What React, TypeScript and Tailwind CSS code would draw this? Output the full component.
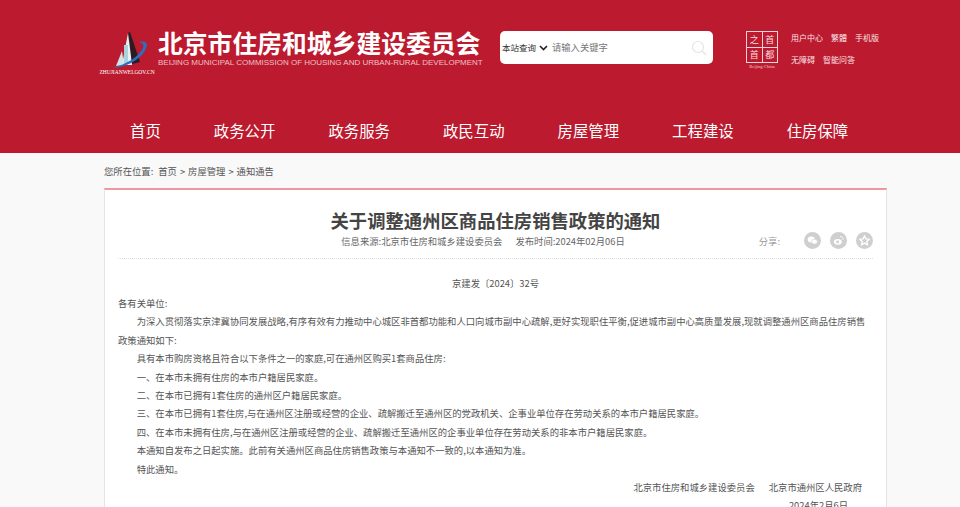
const cjk = "font-['Microsoft_YaHei','Noto_Sans_CJK_SC',sans-serif]";

function Logo() {
  return (
    <div className="flex w-[46px] flex-col items-center shrink-0">
      <svg width="46" height="38" viewBox="0 0 46 38">
        <path d="M18 34 L24 2 L26 2 L28 34 Z" fill="#e8f2f4" />
        <path d="M24 2 L26 1 L36 31 L28 33 Z" fill="#2a1c22" />
        <path d="M12 35 L18 20 L20 34 Z" fill="#cfe3ea" />
        <path d="M20 14 L24 14 L24 34 L20 34 Z" fill="#a9d3dd" />
        <path d="M9 37 C24 36 42 26 43 13 C42 11 39 10 35 11 C39 12 40 14 39 17 C35 26 22 33 9 37 Z" fill="#2b6fc0" />
      </svg>
      <span className="font-['Liberation_Serif',serif] text-[5.5px] leading-[7px] whitespace-nowrap text-white">ZHUJIANWEI.GOV.CN</span>
    </div>
  );
}

function Seal() {
  return (
    <div className="flex w-[36px] flex-col items-center shrink-0">
      <div className={`grid h-[32px] w-[32px] grid-cols-2 grid-rows-2 gap-px border border-[#f3d3d7] bg-[#f3d3d7] text-[9px] leading-none text-[#f7dfe2] ${cjk}`}>
        <span className="flex items-center justify-center bg-[#bc1a2e]">之</span>
        <span className="flex items-center justify-center bg-[#bc1a2e]">首</span>
        <span className="flex items-center justify-center bg-[#bc1a2e]">首</span>
        <span className="flex items-center justify-center bg-[#bc1a2e]">都</span>
      </div>
      <span className="mt-[1px] font-['Liberation_Serif',serif] text-[4.5px] leading-[5px] whitespace-nowrap text-[#f3d3d7]">Beijing·China</span>
    </div>
  );
}

const nav = ["首页", "政务公开", "政务服务", "政民互动", "房屋管理", "工程建设", "住房保障"];

const body = [
  { t: "各有关单位:", i: false },
  { t: "为深入贯彻落实京津冀协同发展战略,有序有效有力推动中心城区非首都功能和人口向城市副中心疏解,更好实现职住平衡,促进城市副中心高质量发展,现就调整通州区商品住房销售政策通知如下:", i: true },
  { t: "具有本市购房资格且符合以下条件之一的家庭,可在通州区购买1套商品住房:", i: true },
  { t: "一、在本市未拥有住房的本市户籍居民家庭。", i: true },
  { t: "二、在本市已拥有1套住房的通州区户籍居民家庭。", i: true },
  { t: "三、在本市已拥有1套住房,与在通州区注册或经营的企业、疏解搬迁至通州区的党政机关、企事业单位存在劳动关系的本市户籍居民家庭。", i: true },
  { t: "四、在本市未拥有住房,与在通州区注册或经营的企业、疏解搬迁至通州区的企事业单位存在劳动关系的非本市户籍居民家庭。", i: true },
  { t: "本通知自发布之日起实施。此前有关通州区商品住房销售政策与本通知不一致的,以本通知为准。", i: true },
  { t: "特此通知。", i: true },
];

export default function App() {
  return (
    <div className={`h-[507px] w-[960px] overflow-hidden bg-[#f9f9f9] ${cjk}`}>
      <header className="h-[153px] bg-[#bc1a2e] text-white">
        <div className="flex h-[108px] items-start pl-[104px] pt-[31px]">
          <Logo />
          <div className="ml-[8px] w-[322px] shrink-0">
            <div className="-mt-[4px] text-[24.8px] font-bold leading-[30px] whitespace-nowrap">北京市住房和城乡建设委员会</div>
            <div className="mt-[1px] font-['Liberation_Sans',sans-serif] text-[8px] leading-[10px] whitespace-nowrap text-[#f0c0c6]">BEIJING MUNICIPAL COMMISSION OF HOUSING AND URBAN-RURAL DEVELOPMENT</div>
          </div>
          <div className="ml-[20px] flex h-[33px] w-[213px] items-center rounded-[5px] bg-white pl-[2px] pr-[6px] text-[8.5px] shrink-0">
            <span className="text-[#333]">本站查询</span>
            <svg className="ml-[3px]" width="9" height="6" viewBox="0 0 9 6"><path d="M1 1 L4.5 4.5 L8 1" fill="none" stroke="#222" strokeWidth="1.6" /></svg>
            <span className="ml-[4px] flex-1 text-[9.3px] text-[#777]">请输入关键字</span>
            <svg width="16" height="16" viewBox="0 0 16 16"><circle cx="7" cy="7" r="5.5" fill="none" stroke="#e4e4e4" strokeWidth="1.2" /><path d="M11 11 L15 15" stroke="#e4e4e4" strokeWidth="1.2" /></svg>
          </div>
          <div className="ml-[31px]"><Seal /></div>
          <div className="ml-[11px] flex flex-col gap-[10px] pt-[1px] text-[8px] leading-[12px] text-[#fbe3e6] whitespace-nowrap">
            <div className="flex gap-[8px]"><span>用户中心</span><span>繁體</span><span>手机版</span></div>
            <div className="flex gap-[8px]"><span>无障碍</span><span>智能问答</span></div>
          </div>
        </div>
        <nav className="flex h-[45px] items-center gap-[53px] pl-[130px] text-[15.4px] whitespace-nowrap">
          {nav.map((n) => <span key={n}>{n}</span>)}
        </nav>
      </header>
      <main className="pl-[104px]">
        <div className="flex h-[35px] items-center gap-[3px] text-[9.33px] text-[#555]">
          <span>您所在位置:</span><span className="ml-[2px]">首页</span><span>&gt;</span><span>房屋管理</span><span>&gt;</span><span>通知通告</span>
        </div>
        <article className="h-[400px] w-[783px] border-x border-[#e4e4e4] border-t-2 border-t-[#ea98a1] bg-white px-[13px]">
          <h1 className="mt-[18px] text-center text-[18.33px] font-bold leading-[24px] text-[#444]">关于调整通州区商品住房销售政策的通知</h1>
          <div className="relative flex h-[27px] items-start justify-center border-b border-dotted border-[#ddd] pr-[25px] pt-[2px] text-[9.33px] leading-[14px] text-[#666]">
            <span>信息来源:北京市住房和城乡建设委员会</span>
            <span className="ml-[13px]">发布时间:2024年02月06日</span>
            <div className="absolute right-0 top-0 flex items-center gap-[9px] text-[#999]">
              <span className="mr-[15px]">分享:</span>
              {[0, 1, 2].map((i) => (
                <span key={i} className="flex h-[17px] w-[17px] items-center justify-center rounded-full bg-[#cfcfcf]">
                  <svg width="11" height="11" viewBox="0 0 11 11" fill="white">
                    {i === 0 && <><ellipse cx="4.3" cy="4.5" rx="3.6" ry="3" /><ellipse cx="7.4" cy="6.7" rx="3" ry="2.4" stroke="#cfcfcf" strokeWidth="0.6" /></>}
                    {i === 1 && <><ellipse cx="4.8" cy="6.8" rx="4" ry="2.9" /><circle cx="4.6" cy="6.9" r="1.4" fill="#cfcfcf" /><path d="M7 1.5 C9.2 1.3 10.4 3 9.9 4.8" fill="none" stroke="white" strokeWidth="1" /></>}
                    {i === 2 && <path d="M5.5 0.8 L6.9 3.9 L10.2 4.3 L7.7 6.5 L8.4 9.8 L5.5 8.1 L2.6 9.8 L3.3 6.5 L0.8 4.3 L4.1 3.9 Z" fill="none" stroke="white" strokeWidth="1.3" />}
                  </svg>
                </span>
              ))}
            </div>
          </div>
          <div className="text-[9.33px] leading-[18.4px] text-[#555]">
            <p className="mt-[15px] text-center">京建发〔2024〕32号</p>
            <div className="mt-[1.5px]">
              {body.map((b, k) => (
                <p key={k} className={b.i ? "indent-[18.66px]" : ""}>{b.t}</p>
              ))}
            </div>
            <p className="mt-[0px] pr-[11px] pt-[0px] text-right">北京市住房和城乡建设委员会<span className="ml-[14px]">北京市通州区人民政府</span></p>
            <p className="pr-[25px] text-right">2024年2月6日</p>
          </div>
        </article>
      </main>
    </div>
  );
}
